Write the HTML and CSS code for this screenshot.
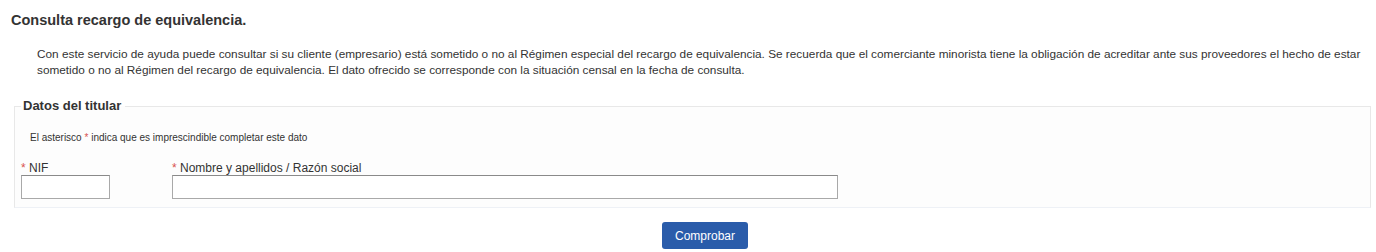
FILE: index.html
```html
<!DOCTYPE html>
<html lang="es">
<head>
    <meta charset="UTF-8">
    <title>Consulta recargo de equivalencia</title>
    <link rel="stylesheet" href="styles.css">
</head>
<body>
    <div class="page">
        <h1 class="title">Consulta recargo de equivalencia.</h1>

        <p class="intro">Con este servicio de ayuda puede consultar si su cliente (empresario) está sometido o no al Régimen especial del recargo de equivalencia. Se recuerda que el comerciante minorista tiene la obligación de acreditar ante sus proveedores el hecho de estar sometido o no al Régimen del recargo de equivalencia. El dato ofrecido se corresponde con la situación censal en la fecha de consulta.</p>

        <fieldset class="titular">
            <legend>Datos del titular</legend>
            <p class="note">El asterisco <span class="req">*</span> indica que es imprescindible completar este dato</p>
            <div class="fields">
                <div class="field field-nif">
                    <label for="nif"><span class="req">*</span> NIF</label>
                    <input type="text" id="nif">
                </div>
                <div class="field field-nombre">
                    <label for="nombre"><span class="req">*</span> Nombre y apellidos / Razón social</label>
                    <input type="text" id="nombre">
                </div>
            </div>
        </fieldset>

        <div class="actions">
            <button class="btn" type="button">Comprobar</button>
        </div>
    </div>
</body>
</html>
```

FILE: styles.css
```css
* {
    box-sizing: border-box;
}

body {
    margin: 0;
    font-family: 'Liberation Sans', Arial, sans-serif;
    color: #333;
    background: #fff;
}

.page {
    padding: 12px 5px 0 11px;
}

.title {
    margin: 0;
    font-size: 14.5px;
    font-weight: bold;
    line-height: 17px;
    color: #333;
}

.intro {
    margin: 17px 0 0 26px;
    font-size: 11.8px;
    line-height: 16px;
}

.titular {
    margin: 20px 0 0 3px;
    padding: 0 6px 8px 6px;
    border: 1px solid #e8e8e8;
    border-bottom-color: #eef1f6;
    background: #fdfdfd;
}

.titular legend {
    padding: 0 4px 0 2px;
    font-size: 13px;
    font-weight: bold;
    line-height: 16px;
}

.note {
    margin: 18px 0 0 9px;
    font-size: 10px;
    line-height: 12px;
}

.req {
    color: #d9534f;
}

.fields {
    display: flex;
    gap: 62px;
    margin-top: 18px;
}

.field label {
    display: block;
    font-size: 12px;
    line-height: 13px;
}

.field input {
    display: block;
    height: 24px;
    margin: 0;
    border: 1px solid #a9a9a9;
    border-top-color: #8a8a8a;
    background: #fff;
    font: 12px 'Liberation Sans', Arial, sans-serif;
}

.field-nif input {
    width: 89px;
}

.field-nombre input {
    width: 666px;
}

.actions {
    text-align: center;
    margin-top: 14px;
    padding-left: 28px;
}

.btn {
    width: 86px;
    height: 27px;
    border: none;
    border-radius: 3px;
    background: #2a5caa;
    color: #fff;
    font: 12px 'Liberation Sans', Arial, sans-serif;
    cursor: pointer;
}
```
